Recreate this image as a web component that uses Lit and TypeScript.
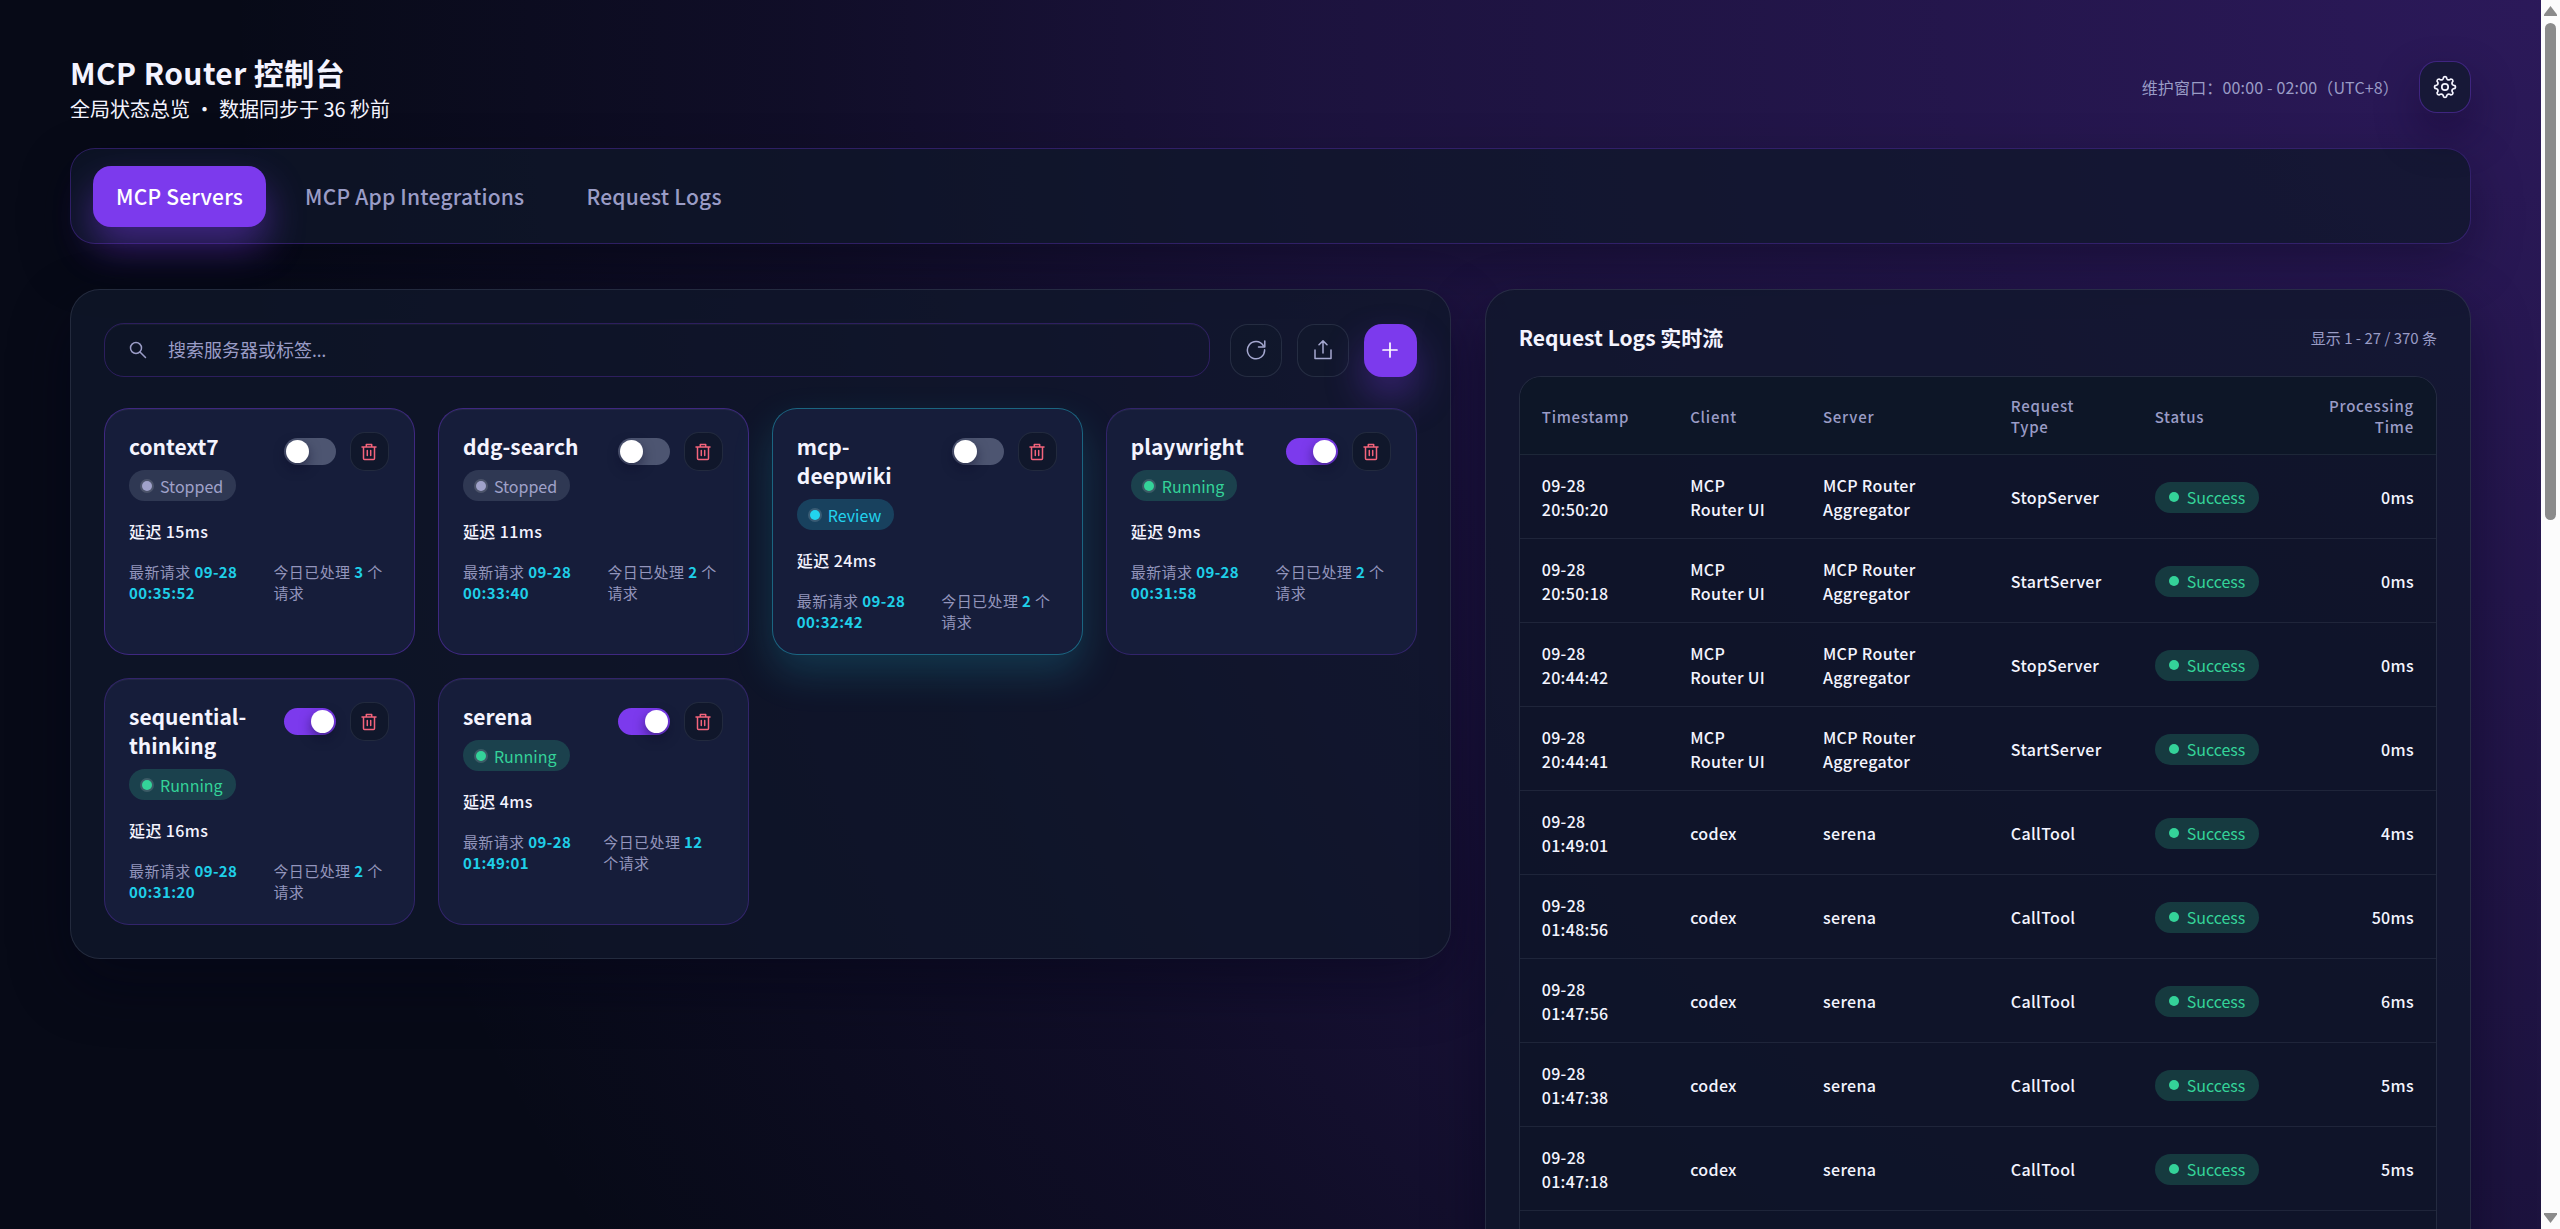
import { LitElement, html, css, svg } from "lit";
import { customElement } from "lit/decorators.js";

interface Server {
  name: string;
  status: "Stopped" | "Review" | "Running";
  on: boolean;
  latency: number;
  time: string;
  count: number;
}

interface Log {
  time: string;
  client: string;
  server: string;
  type: string;
  ms: number;
}

const SERVERS: Server[] = [
  { name: "context7", status: "Stopped", on: false, latency: 15, time: "09-28 00:35:52", count: 3 },
  { name: "ddg-search", status: "Stopped", on: false, latency: 11, time: "09-28 00:33:40", count: 2 },
  { name: "mcp-deepwiki", status: "Review", on: false, latency: 24, time: "09-28 00:32:42", count: 2 },
  { name: "playwright", status: "Running", on: true, latency: 9, time: "09-28 00:31:58", count: 2 },
  { name: "sequential-thinking", status: "Running", on: true, latency: 16, time: "09-28 00:31:20", count: 2 },
  { name: "serena", status: "Running", on: true, latency: 4, time: "09-28 01:49:01", count: 12 },
];

const UI = "MCP Router UI";
const AGG = "MCP Router Aggregator";

const LOGS: Log[] = [
  { time: "09-28 20:50:20", client: UI, server: AGG, type: "StopServer", ms: 0 },
  { time: "09-28 20:50:18", client: UI, server: AGG, type: "StartServer", ms: 0 },
  { time: "09-28 20:44:42", client: UI, server: AGG, type: "StopServer", ms: 0 },
  { time: "09-28 20:44:41", client: UI, server: AGG, type: "StartServer", ms: 0 },
  { time: "09-28 01:49:01", client: "codex", server: "serena", type: "CallTool", ms: 4 },
  { time: "09-28 01:48:56", client: "codex", server: "serena", type: "CallTool", ms: 50 },
  { time: "09-28 01:47:56", client: "codex", server: "serena", type: "CallTool", ms: 6 },
  { time: "09-28 01:47:38", client: "codex", server: "serena", type: "CallTool", ms: 5 },
  { time: "09-28 01:47:18", client: "codex", server: "serena", type: "CallTool", ms: 5 },
  { time: "09-28 01:47:02", client: "codex", server: "serena", type: "CallTool", ms: 5 },
];

const gear = () => {
  const pts: string[] = [];
  for (let i = 0; i < 8; i++) {
    const at = (deg: number, r: number) => {
      const a = ((i * 45 + deg - 90) * Math.PI) / 180;
      return `${(12 + r * Math.cos(a)).toFixed(2)} ${(12 + r * Math.sin(a)).toFixed(2)}`;
    };
    pts.push(`${i ? "L" : "M"}${at(-8, 10)} Q${at(0, 11)} ${at(8, 10)} L${at(12, 8.6)} Q${at(22.5, 7)} ${at(33, 8.6)}`);
  }
  return svg`<path d="${pts.join(" ")}Z"/><circle cx="12" cy="12" r="3.2"/>`;
};

@customElement("app-root")
export class AppRoot extends LitElement {
  static styles = css`
    :host {
      display: block;
      height: 100vh;
      overflow: hidden;
      color: #f4f4ff;
      font-family: "Noto Sans CJK SC", "Noto Sans", sans-serif;
      font-size: 20px;
      line-height: 24px;
      letter-spacing: 0.02em;
    }
    *,
    *::before,
    *::after {
      box-sizing: border-box;
    }
    button,
    input {
      font: inherit;
      color: inherit;
    }
    button {
      padding: 0;
      cursor: pointer;
    }
    h1,
    h2,
    h3,
    p {
      margin: 0;
    }
    svg {
      display: block;
      fill: none;
      stroke: currentColor;
      stroke-linecap: round;
      stroke-linejoin: round;
    }
    .window {
      display: flex;
      height: 100%;
    }
    .view {
      flex: 1;
      min-width: 0;
      overflow: hidden;
      background:
        radial-gradient(
          circle farthest-corner at 100% 0%,
          rgba(124, 58, 237, 0.31),
          rgba(124, 58, 237, 0.18) 44%,
          rgba(124, 58, 237, 0.08) 62%,
          transparent 82%
        ),
        #070a17;
    }
    .scrollbar {
      display: flex;
      flex-direction: column;
      align-items: center;
      justify-content: space-between;
      width: 19px;
      padding: 6px 0;
      background: #fcfcfc;
    }
    .scrollbar svg {
      fill: #8b8b8b;
      stroke: none;
    }
    .track {
      flex: 1;
      padding: 7px 0;
    }
    .thumb {
      width: 11px;
      height: 42%;
      border-radius: 6px;
      background: #8b8b8b;
    }
    .page {
      padding: 50px 70px 0;
    }
    .top {
      display: flex;
      justify-content: space-between;
      align-items: center;
      height: 74px;
      margin-bottom: 24px;
    }
    .top h1 {
      font-size: 30px;
      line-height: 44px;
      font-weight: 700;
    }
    .top p {
      font-size: 20px;
      line-height: 30px;
      letter-spacing: normal;
    }
    .right {
      display: flex;
      align-items: center;
      gap: 20px;
      color: #9a9cc6;
      font-size: 16px;
      letter-spacing: 0.01em;
    }
    .settings {
      display: grid;
      place-items: center;
      width: 52px;
      height: 52px;
      border: 1px solid rgba(124, 58, 237, 0.4);
      border-radius: 18px;
      background: #171837;
      color: #f4f4ff;
      box-shadow: 0 20px 44px rgba(15, 5, 40, 0.45);
    }
    .tabs {
      display: flex;
      align-items: center;
      gap: 16px;
      height: 96px;
      padding: 0 22px;
      margin-bottom: 45px;
      border: 1px solid rgba(124, 58, 237, 0.3);
      border-radius: 25px;
      background: rgba(15, 23, 42, 0.75);
      box-shadow: 0 20px 50px rgba(5, 5, 20, 0.35);
    }
    .tab {
      height: 61px;
      padding: 0 23px;
      border: 0;
      border-radius: 18px;
      background: none;
      color: #9a9cc6;
      font-size: 21px;
      font-weight: 500;
      letter-spacing: 0.01em;
    }
    .tab.active {
      background: #7c3aed;
      color: #fff;
      box-shadow: 0 20px 38px rgba(124, 58, 237, 0.45);
    }
    .columns {
      display: grid;
      grid-template-columns: 1.4fr 1fr;
      align-items: start;
      gap: 34px;
    }
    .panel {
      padding: 33px;
      border: 1px solid rgba(148, 163, 184, 0.16);
      border-radius: 30px;
      background: rgba(15, 23, 42, 0.78);
      box-shadow: 0 24px 60px rgba(5, 5, 25, 0.45);
    }
    .toolbar {
      display: flex;
      align-items: center;
      gap: 15px;
      margin-bottom: 31px;
    }
    .search {
      display: flex;
      flex: 1;
      align-items: center;
      gap: 21px;
      height: 54px;
      margin-right: 5px;
      padding: 0 24px;
      border: 1px solid rgba(124, 58, 237, 0.28);
      border-radius: 20px;
      color: #9a9cc6;
      box-shadow: inset 0 1px 0 rgba(255, 255, 255, 0.04);
    }
    .search input {
      flex: 1;
      min-width: 0;
      padding: 0;
      border: 0;
      outline: 0;
      background: none;
      color: #f4f4ff;
      font-family: "Noto Sans", "Noto Sans CJK SC", sans-serif;
      font-size: 18px;
    }
    .search input::placeholder {
      color: #9a9cc6;
      opacity: 1;
    }
    .tool {
      display: grid;
      place-items: center;
      width: 52px;
      height: 53px;
      border: 1px solid rgba(148, 163, 184, 0.16);
      border-radius: 18px;
      background: rgba(15, 23, 42, 0.5);
      color: #a5a8d0;
    }
    .tool.add {
      width: 53px;
      border: 0;
      background: #7c3aed;
      color: #fff;
      box-shadow: 0 20px 38px rgba(124, 58, 237, 0.35);
    }
    .cards {
      display: grid;
      grid-template-columns: repeat(4, 1fr);
      gap: 23px;
    }
    .card {
      display: flex;
      flex-direction: column;
      gap: 18px;
      padding: 23px 25px 22px 24px;
      border: 1px solid rgba(124, 58, 237, 0.4);
      border-radius: 25px;
      background: #161d3a;
      box-shadow: inset 0 1px 0 rgba(255, 255, 255, 0.05);
    }
    .card.Running {
      border-color: rgba(124, 58, 237, 0.28);
    }
    .card.Review {
      border-color: rgba(34, 211, 238, 0.4);
      box-shadow: 0 18px 40px rgba(34, 211, 238, 0.18);
    }
    .head {
      display: flex;
      align-items: flex-start;
      gap: 15px;
    }
    .ident {
      display: flex;
      flex: 1;
      flex-direction: column;
      align-items: flex-start;
      gap: 9px;
      min-width: 0;
    }
    .ident h3 {
      font-size: 21px;
      line-height: 29px;
      font-weight: 700;
      letter-spacing: normal;
    }
    .actions {
      display: flex;
      gap: 14px;
    }
    .badge {
      display: inline-flex;
      align-items: center;
      gap: 8px;
      height: 31px;
      padding: 0 14px;
      border-radius: 16px;
      font-size: 16px;
      letter-spacing: normal;
    }
    .badge::before {
      width: 10px;
      height: 10px;
      border-radius: 50%;
      background: currentColor;
      content: "";
    }
    .ident .badge {
      padding: 0 13px;
    }
    .ident .badge::before {
      box-shadow: 0 0 0 2px rgba(255, 255, 255, 0.14);
    }
    .badge.Stopped {
      background: rgba(148, 163, 184, 0.2);
      color: #a0a2ca;
    }
    .badge.Review {
      background: rgba(34, 211, 238, 0.2);
      color: #22d3ee;
    }
    .badge.Running,
    .badge.Success {
      background: rgba(52, 211, 153, 0.2);
      color: #34d399;
    }
    .switch {
      flex: none;
      width: 52px;
      height: 27px;
      margin: 6px 0 0;
      padding: 2px;
      border-radius: 14px;
      background: #4d5571;
      appearance: none;
      cursor: pointer;
    }
    .switch::before {
      display: block;
      width: 23px;
      height: 23px;
      border-radius: 50%;
      background: #fff;
      box-shadow: 0 5px 12px rgba(10, 10, 40, 0.5);
      content: "";
    }
    .switch:checked {
      background: #7c3aed;
    }
    .switch:checked::before {
      margin-left: auto;
    }
    .delete {
      display: grid;
      flex: none;
      place-items: center;
      width: 39px;
      height: 39px;
      border: 1px solid rgba(148, 163, 184, 0.14);
      border-radius: 15px;
      background: #10172b;
      color: #f4647c;
    }
    .latency {
      font-size: 16px;
      font-weight: 500;
    }
    .meta {
      display: flex;
      padding-right: 2px;
      color: #9395bc;
      font-size: 15px;
      line-height: 21px;
    }
    .meta strong {
      color: #1fcfe8;
      font-weight: 700;
    }
    .logs-head {
      display: flex;
      align-items: center;
      justify-content: space-between;
      height: 29px;
      margin-bottom: 24px;
    }
    .logs-head h2 {
      font-size: 21px;
      line-height: 29px;
      font-weight: 700;
      letter-spacing: normal;
    }
    .logs-head span {
      color: #9a9cc6;
      font-size: 15px;
      letter-spacing: normal;
    }
    .table-wrap {
      overflow: hidden;
      border: 1px solid rgba(148, 163, 184, 0.16);
      border-radius: 22px;
      background: rgba(13, 20, 38, 0.6);
    }
    table {
      width: 100%;
      border-collapse: collapse;
      table-layout: fixed;
      font-size: 16px;
      letter-spacing: 0.02em;
    }
    th,
    td {
      padding: 18px 22px 17px;
      border-bottom: 1px solid rgba(148, 163, 184, 0.12);
      text-align: left;
      vertical-align: middle;
      font-weight: 500;
    }
    td .badge {
      font-weight: 400;
    }
    th {
      background: #0d1627;
      color: #9a9cc6;
      font-size: 15px;
      line-height: 21px;
      letter-spacing: 0.05em;
    }
    .c-time { width: 16.2%; }
    .c-client { width: 14.5%; }
    .c-server { width: 20.5%; }
    .c-type { width: 15.7%; }
    .c-status { width: 17%; }
    .num {
      text-align: right;
    }
  `;

  private card(s: Server) {
    return html`<article class="card ${s.status}">
      <div class="head">
        <div class="ident">
          <h3>${s.name}</h3>
          <span class="badge ${s.status}">${s.status}</span>
        </div>
        <div class="actions">
          <input class="switch" type="checkbox" role="switch" aria-label=${s.name} .checked=${s.on} />
          <button class="delete" aria-label="Delete ${s.name}">
            <svg width="16" height="18" viewBox="0 0 16 18" stroke-width="1.5">
              <path d="M1 4h14M5.300 4V1.500h5.400V4M2.500 4v11.600a1 1 0 0 0 1 1h9a1 1 0 0 0 1-1V4M6.300 7.500v5M9.700 7.500v5" />
            </svg>
          </button>
        </div>
      </div>
      <p class="latency">延迟 ${s.latency}ms</p>
      <div class="meta">
        <span>最新请求 <strong>${s.time}</strong></span>
        <span>今日已处理 <strong>${s.count}</strong> 个请求</span>
      </div>
    </article>`;
  }

  private row(l: Log) {
    return html`<tr>
      <td>${l.time}</td>
      <td>${l.client}</td>
      <td>${l.server}</td>
      <td>${l.type}</td>
      <td><span class="badge Success">Success</span></td>
      <td class="num">${l.ms}ms</td>
    </tr>`;
  }

  render() {
    return html`<div class="window">
      <div class="view">
        <div class="page">
          <header class="top">
            <div>
              <h1>MCP Router 控制台</h1>
              <p>全局状态总览 ・ 数据同步于 36 秒前</p>
            </div>
            <div class="right">
              <span>维护窗口：00:00 - 02:00（UTC+8）</span>
              <button class="settings" aria-label="Settings">
                <svg width="24" height="24" viewBox="0 0 24 24" stroke-width="1.7">${gear()}</svg>
              </button>
            </div>
          </header>
          <nav class="tabs">
            <button class="tab active">MCP Servers</button>
            <button class="tab">MCP App Integrations</button>
            <button class="tab">Request Logs</button>
          </nav>
          <main class="columns">
            <section class="panel">
              <div class="toolbar">
                <label class="search">
                  <svg width="18" height="18" viewBox="0 0 18 18" stroke-width="1.5">
                    <circle cx="7" cy="7" r="5.5" /><path d="m11 11 5.5 5.5" />
                  </svg>
                  <input type="search" placeholder="搜索服务器或标签…" aria-label="搜索服务器或标签" />
                </label>
                <button class="tool" aria-label="Refresh">
                  <svg width="20" height="20" viewBox="0 0 20 20" stroke-width="1.5">
                    <path d="M18.800 1v6H12.500M17.200 5.500A8.600 8.600 0 1 0 18.600 9.800" />
                  </svg>
                </button>
                <button class="tool" aria-label="Export">
                  <svg width="20" height="20" viewBox="0 0 20 20" stroke-width="1.5">
                    <path d="M10 13V1M6 4.800l4-3.900 4 3.900M2 10v8.500h16V10" />
                  </svg>
                </button>
                <button class="tool add" aria-label="Add">
                  <svg width="16" height="16" viewBox="0 0 16 16" stroke-width="1.7">
                    <path d="M8 1v14M1 8h14" />
                  </svg>
                </button>
              </div>
              <div class="cards">${SERVERS.map((s) => this.card(s))}</div>
            </section>
            <section class="panel">
              <div class="logs-head">
                <h2>Request Logs 实时流</h2>
                <span>显示 1 - 27 / 370 条</span>
              </div>
              <div class="table-wrap">
                <table>
                  <thead>
                    <tr>
                      <th class="c-time">Timestamp</th>
                      <th class="c-client">Client</th>
                      <th class="c-server">Server</th>
                      <th class="c-type">Request Type</th>
                      <th class="c-status">Status</th>
                      <th class="num">Processing Time</th>
                    </tr>
                  </thead>
                  <tbody>
                    ${LOGS.map((l) => this.row(l))}
                  </tbody>
                </table>
              </div>
            </section>
          </main>
        </div>
      </div>
      <div class="scrollbar">
        <svg width="13" height="10" viewBox="0 0 13 10"><path d="M6.500 0 13 8.500V10H0V8.500Z" /></svg>
        <div class="track"><div class="thumb"></div></div>
        <svg width="13" height="10" viewBox="0 0 13 10"><path d="M6.500 10 13 1.500V0H0V1.500Z" /></svg>
      </div>
    </div>`;
  }
}
